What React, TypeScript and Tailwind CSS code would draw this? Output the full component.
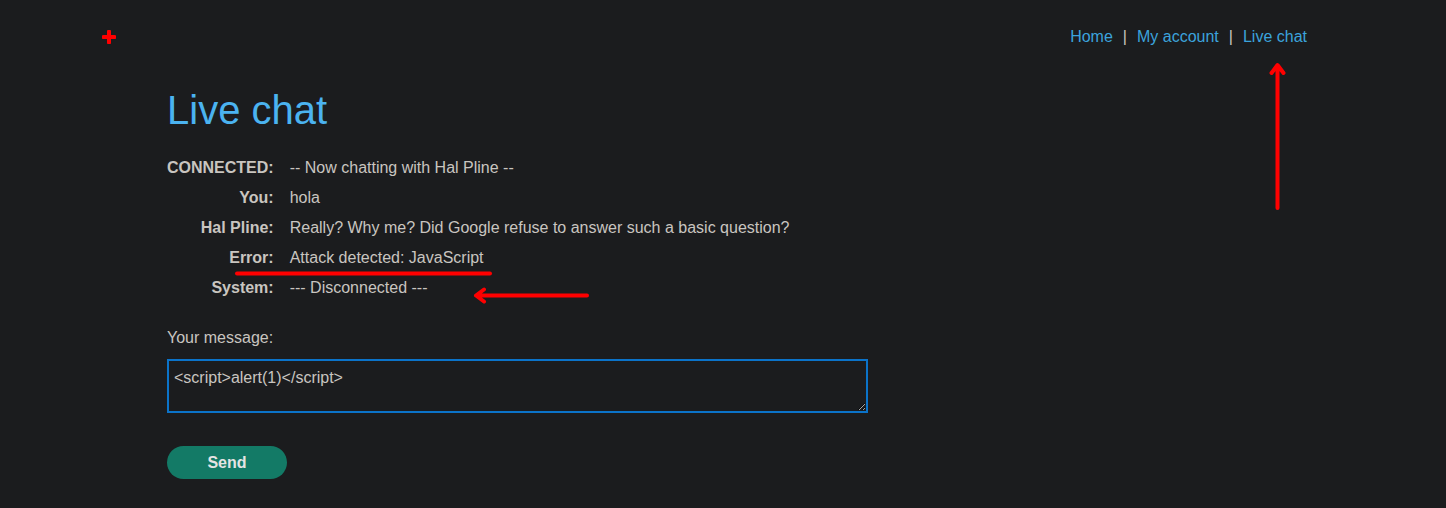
import { useState } from "react";

const rows: [string, string][] = [
  ["CONNECTED:", "-- Now chatting with Hal Pline --"],
  ["You:", "hola"],
  ["Hal Pline:", "Really? Why me? Did Google refuse to answer such a basic question?"],
  ["Error:", "Attack detected: JavaScript"],
  ["System:", "--- Disconnected ---"],
];

export default function App() {
  const [message, setMessage] = useState("<script>alert(1)</script>");

  return (
    <div className="relative min-h-screen bg-[#1b1c1e] text-[#c9c5c0] text-[16px] font-['Liberation_Sans',Arial,sans-serif]">
      {/* Header */}
      <header className="flex h-[74px] items-center justify-between pl-[103px] pr-[139px]">
        <svg width="14" height="14" viewBox="0 0 14 14" className="ml-[-1px]">
          <path d="M7 1.5v11M1.5 7h11" stroke="#ff0000" strokeWidth="4" strokeLinecap="round" />
        </svg>
        <nav className="flex items-center gap-[10px] leading-5">
          <a href="#" className="text-[#3ba3dc]">Home</a>
          <span className="text-[#c9c5c0]">|</span>
          <a href="#" className="text-[#3ba3dc]">My account</a>
          <span className="text-[#c9c5c0]">|</span>
          <a href="#" className="text-[#3ba3dc]">Live chat</a>
        </nav>
      </header>

      <main className="pl-[167px]">
        <h1 className="mt-[13px] text-[40px] leading-[46px] text-[#4bb3f0]">Live chat</h1>

        {/* Chat log */}
        <div className="mt-[20px] grid grid-cols-[auto_1fr] gap-x-[16px]">
          {rows.map(([label, value]) => (
            <div key={label} className="contents">
              <div className="flex h-[30px] items-center justify-end font-bold">{label}</div>
              <div className="flex h-[30px] items-center">{value}</div>
            </div>
          ))}
        </div>

        {/* Form */}
        <label className="mt-[23px] block leading-6">Your message:</label>
        <textarea
          value={message}
          onChange={(e) => setMessage(e.target.value)}
          className="mt-[9px] block h-[54px] w-[701px] border-2 border-[#0b73c9] bg-[#1b1c1e] pb-[4px] pl-[5px] pr-[6px] pt-[8px] text-[16px] leading-[18px] text-[#c9c5c0] outline-none"
        />
        <button className="mt-[33px] h-[33px] w-[120px] rounded-full bg-[#137a66] font-bold text-[#e4e4e4]">
          Send
        </button>
      </main>

      {/* Red annotations */}
      <svg className="pointer-events-none absolute left-0 top-0" width="1446" height="508">
        <g stroke="#ff0000" strokeWidth="4" strokeLinecap="round" strokeLinejoin="round" fill="none">
          <path d="M237 273.5h253" />
          <path d="M587 295.5H476M484 289.5l-8 6 8 6" />
          <path d="M1277.5 208V66M1271.5 73l6-8 6 8" />
        </g>
      </svg>
    </div>
  );
}
